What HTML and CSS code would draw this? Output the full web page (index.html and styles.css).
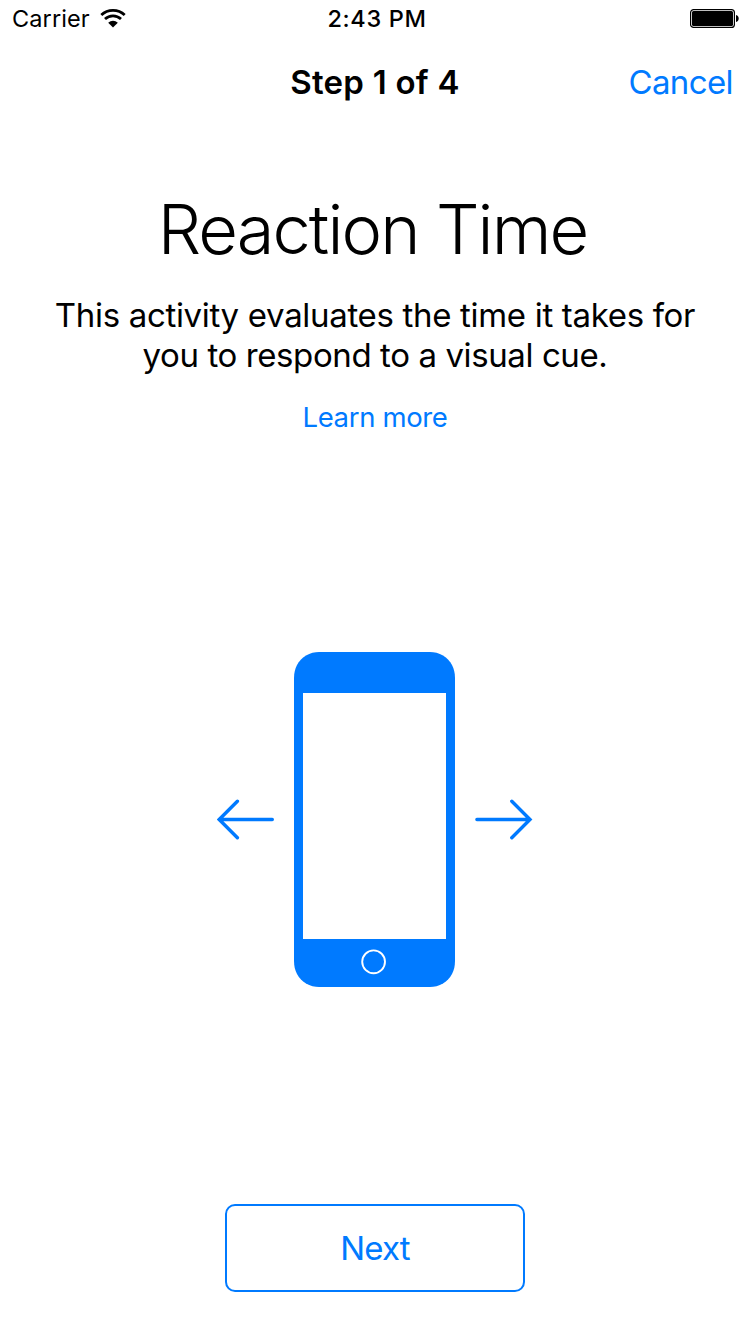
FILE: index.html
```html
<!DOCTYPE html>
<html lang="en">
<head>
<meta charset="utf-8">
<title>Reaction Time</title>
<link rel="stylesheet" href="styles.css">
</head>
<body>
<div class="status">
  <div class="carrier"><span class="carrier-name">Carrier</span>
    <svg class="wifi" width="26" height="20" viewBox="0 0 26 20" fill="none" stroke="#000" stroke-width="2.8">
      <path d="M1.3 7.1C7.8 .9 18.2 .9 24.7 7.1"/>
      <path d="M5 11.1C9.5 6.9 16.5 6.9 21 11.1"/>
      <path d="M8.2 14.8C11 12.1 15 12.1 17.8 14.8L13 19.4Z" fill="#000" stroke="none"/>
    </svg>
  </div>
  <div class="clock"><span>2:43 PM</span></div>
  <svg class="battery" width="50" height="20" viewBox="0 0 50 20">
    <rect x=".6" y=".6" width="43.8" height="17.8" rx="3" fill="none" stroke="#000" stroke-width="1.2"/>
    <rect x="2" y="2" width="41" height="15" rx="1.5"/>
    <path d="M46 6C49.6 6.5 49.6 12.5 46 13Z"/>
  </svg>
</div>
<header class="nav">
  <h1 class="step"><span>Step 1 of 4</span></h1>
  <a class="cancel"><span>Cancel</span></a>
</header>
<main class="content">
  <h2 class="title"><span>Reaction Time</span></h2>
  <p class="summary"><span class="line-one">This activity evaluates the time it takes for</span><br><span class="line-two">you to respond to a visual cue.</span></p>
  <a class="learn"><span>Learn more</span></a>
  <svg class="phone" width="316" height="335" viewBox="217 652 316 335">
    <path fill="#007aff" d="M319 652H430C434 652 439 653 443 655.5C447 658 450 661 452 665C454 669 455 673 455 678V961C455 966 454 970 452 974C450 978 447 981 443 983.5C439 986 434 987 430 987H319C315 987 310 986 306 983.5C302 981 299 978 297 974C295 970 294 966 294 961V678C294 673 295 669 297 665C299 661 302 658 306 655.5C310 653 315 652 319 652Z"/>
    <rect x="303" y="693" width="143" height="246" fill="#fff"/>
    <circle cx="373.6" cy="961.8" r="11.4" fill="none" stroke="#fff" stroke-width="1.9"/>
    <g fill="none" stroke="#007aff" stroke-width="3.4" stroke-linecap="round" stroke-linejoin="miter">
      <path d="M272.3 819.5H219.5M237.4 801.2L219.2 819.5L237.4 837.8"/>
      <path d="M476.9 819.5H529.7M511.8 801.2L530 819.5L511.8 837.8"/>
    </g>
  </svg>
  <button class="next"><span>Next</span></button>
</main>
</body>
</html>
```
FILE: styles.css
```css
* { box-sizing: border-box; }

body {
  margin: 0;
  height: 1332px;
  display: flex;
  flex-direction: column;
  background: #fff;
  color: #000;
  font-family: Inter, "Liberation Sans", sans-serif;
  overflow: hidden;
}

.status {
  display: grid;
  grid-template-columns: 250px 1fr 250px;
  align-items: center;
  height: 37px;
  padding: 0 6px 0 12px;
  font-size: 23.5px;
}

.carrier { display: flex; align-items: center; gap: 10px; }
.carrier-name { letter-spacing: 0.1px; }
.wifi { display: block; margin-top: -2px; }
.clock { padding-left: 2px; text-align: center; font-weight: 500; letter-spacing: 0.65px; }
.battery { justify-self: end; }

.nav {
  display: grid;
  grid-template-columns: 200px 1fr 200px;
  align-items: center;
  height: 90px;
  padding: 0 13px;
  font-size: 33px;
}

.step {
  grid-column: 2;
  margin: 0;
  padding-left: 4px;
  text-align: center;
  font-size: 33px;
  font-weight: 600;
  letter-spacing: 0.25px;
}

.cancel, .learn { color: #007aff; }
.cancel { text-align: right; letter-spacing: -0.6px; }

.content {
  flex: 1;
  display: flex;
  flex-direction: column;
  align-items: center;
  padding: 63px 0 40px 4px;
}

.title {
  margin: 0;
  padding-right: 5px;
  font-size: 68.5px;
  line-height: 80px;
  font-weight: 320;
  letter-spacing: -1.9px;
}

.summary {
  margin: 25px 0 0;
  text-align: center;
  font-size: 33px;
  line-height: 40px;
  letter-spacing: -0.32px;
  white-space: nowrap;
}

.line-two { letter-spacing: -0.4px; }

.learn {
  margin-top: 25px;
  font-size: 27.5px;
  line-height: 34px;
  letter-spacing: -0.35px;
}

.phone { display: block; margin-top: 218px; }

.next {
  width: 300px;
  height: 88px;
  margin-top: auto;
  border: 2px solid #007aff;
  border-radius: 10px;
  background: transparent;
  color: #007aff;
  font: 400 33px Inter, "Liberation Sans", sans-serif;
  letter-spacing: -0.8px;
}
```
